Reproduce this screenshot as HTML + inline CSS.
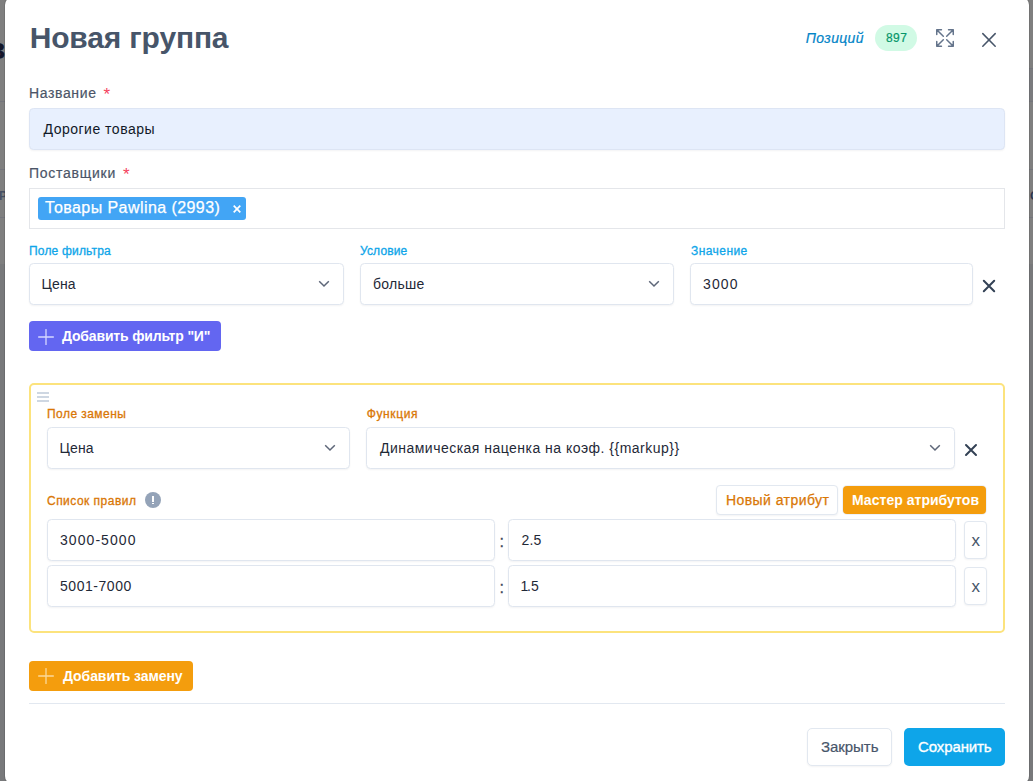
<!DOCTYPE html>
<html lang="ru">
<head>
<meta charset="utf-8">
<title>Новая группа</title>
<style>
*{box-sizing:border-box;margin:0;padding:0}
html,body{width:1033px;height:781px;overflow:hidden}
body{font-family:"Liberation Sans",sans-serif;background:#78797b;position:relative;color:#1f2937}
.a{position:absolute}
.t{position:absolute;white-space:nowrap;line-height:20px}
.bg-top{left:0;top:0;width:1033px;height:264px;background:#7f7f7f}
.bg-line{left:0;width:1033px;height:1px;background:#74757c}
.modal{left:5px;top:-3px;width:1024px;height:787px;background:#fff;border-radius:8px;box-shadow:0 0 0 1px rgba(0,0,0,.1)}
.lbl{font-size:14px;color:#4b5568;-webkit-text-stroke:.2px #4b5568}
.ast{font-size:17px;color:#f43f5e}
.lb{font-size:12px;color:#0ea5e9;-webkit-text-stroke:.3px #0ea5e9}
.lo{font-size:12px;color:#d97706;-webkit-text-stroke:.3px #d97706}
.box{position:absolute;background:#fff;border:1px solid #e0e6ef;border-radius:4.500px;height:42px;box-shadow:0 1px 2px rgba(15,23,42,.05)}
.v{font-size:14px;color:#1f2937}
.chev{position:absolute;width:12px;height:8px}
.btn{position:absolute;border-radius:4px;height:30px}
.bt{font-size:14px;font-weight:700;color:#fff}
.xb{position:absolute;width:23px;height:38px;border:1px solid #e2e8f0;border-radius:4px;background:#fff;box-shadow:0 1px 2px rgba(15,23,42,.05)}
/*LS*/
#title{letter-spacing:-0.16px}
#poz{letter-spacing:0.35px}
#n897{letter-spacing:0.45px}
#l1{letter-spacing:0.63px}
#v1{letter-spacing:0.5px}
#l2{letter-spacing:0.74px}
#tag{letter-spacing:0.43px}
#l3{letter-spacing:0.18px}
#l4{letter-spacing:0.15px}
#l5{letter-spacing:0.44px}
#v2{letter-spacing:0.13px}
#v3{letter-spacing:0.26px}
#v4{letter-spacing:1.13px}
#b1{letter-spacing:-0.17px}
#l6{letter-spacing:0.45px}
#l7{letter-spacing:0.6px}
#v5{letter-spacing:0.13px}
#v6{letter-spacing:0.48px}
#l8{letter-spacing:0.48px}
#b2{letter-spacing:0.43px}
#b3{letter-spacing:0.03px}
#v7{letter-spacing:1.06px}
#v9{letter-spacing:0.54px}
#v8{letter-spacing:0.1px}
#b4{letter-spacing:-0.07px}
#b5{letter-spacing:-0.05px}
#b6{letter-spacing:-0.11px}
/*ENDLS*/
</style>
</head>
<body>
<div class="a bg-top"></div>
<div class="a" style="left:1020px;top:68px;width:13px;height:33px;background:#7a7b7e"></div>
<div class="a bg-line" style="top:68px;left:1020px;width:13px"></div>
<div class="a bg-line" style="top:101px"></div>
<div class="a bg-line" style="top:169px"></div>
<div class="a bg-line" style="top:217px"></div>
<div class="t" style="left:-13px;top:29px;font-size:30px;font-weight:700;color:#15172a;line-height:40px">в</div>
<div class="t" style="left:-1px;top:186px;font-size:12px;font-weight:700;color:#465064">Р</div>
<div class="t" style="left:1030px;top:186px;font-size:12px;font-weight:700;color:#2c3550">О</div>

<div class="a modal"></div>

<!-- header -->
<div id="title" class="t" style="left:29.7px;top:17.6px;font-size:30px;font-weight:700;color:#475569;line-height:40px">Новая группа</div>
<div id="poz" class="t" style="left:805.8px;top:28px;font-size:14px;font-style:italic;color:#0284c7;-webkit-text-stroke:.2px #0284c7">Позиций</div>
<div class="a" style="left:875px;top:25px;width:42px;height:26px;border-radius:13px;background:#d1fae5"></div>
<div id="n897" class="t" style="left:886px;top:28px;font-size:12px;color:#059669;-webkit-text-stroke:.2px #059669">897</div>
<svg class="a" style="left:933px;top:26px" width="24" height="24" viewBox="0 0 24 24" fill="none" stroke="#64748b" stroke-width="1.500" stroke-linecap="round" stroke-linejoin="round"><path d="M3.750 3.750v4.700m0-4.700h4.700m-4.700 0L10.300 10.300M3.750 20.250v-4.700m0 4.700h4.700m-4.700 0L10.300 13.700M20.250 3.750h-4.700m4.700 0v4.700m0-4.700L13.700 10.300M20.250 20.250h-4.700m4.700 0v-4.700m0 4.700L13.700 13.700"/></svg>
<svg class="a" style="left:977px;top:28px" width="24" height="24" viewBox="0 0 24 24" fill="none" stroke="#475569" stroke-width="1.500" stroke-linecap="round"><path d="M5.800 5.600l12.400 12.600M18.200 5.600L5.800 18.200"/></svg>

<!-- name -->
<div id="l1" class="t lbl" style="left:29px;top:83px">Название</div>
<div id="a1" class="t ast" style="left:103.600px;top:85px">*</div>
<div class="box" style="left:29px;top:108px;width:976px;background:#e8f0fe;border-color:#dde5f4"></div>
<div id="v1" class="t v" style="left:43.5px;top:119px;color:#111827">Дорогие товары</div>

<!-- suppliers -->
<div id="l2" class="t lbl" style="left:29px;top:163px">Поставщики</div>
<div id="a2" class="t ast" style="left:123px;top:165px">*</div>
<div class="a" style="left:29px;top:188px;width:976px;height:41px;border:1px solid #e4e6ea;background:#fff"></div>
<div class="a" style="left:38px;top:197px;width:208px;height:23px;border-radius:3px;background:#42a5f5"></div>
<div id="tag" class="t" style="left:45px;top:198px;font-size:16px;color:#fff;-webkit-text-stroke:.25px #fff">Товары Pawlina (2993)</div>
<svg class="a" style="left:233px;top:205px" width="8" height="8" viewBox="0 0 8 8" fill="none" stroke="#fff" stroke-width="1.700"><path d="M.7.700l6.600 6.600M7.300.7L.7 7.300"/></svg>

<!-- filter row -->
<div id="l3" class="t lb" style="left:29px;top:240.6px">Поле фильтра</div>
<div id="l4" class="t lb" style="left:360px;top:240.6px">Условие</div>
<div id="l5" class="t lb" style="left:691px;top:240.6px">Значение</div>
<div class="box" style="left:29px;top:263px;width:315px"></div>
<div class="box" style="left:360px;top:263px;width:314px"></div>
<div class="box" style="left:690px;top:263px;width:283px"></div>
<div id="v2" class="t v" style="left:41.5px;top:274px">Цена</div>
<div id="v3" class="t v" style="left:373px;top:274px">больше</div>
<div id="v4" class="t v" style="left:703px;top:274px">3000</div>
<svg class="chev" style="left:318.100px;top:280.300px" viewBox="0 0 12 8" fill="none" stroke="#5d6678" stroke-width="1.500" stroke-linecap="butt" stroke-linejoin="miter"><path d="M1.200 1.200L6 6l4.800-4.800"/></svg>
<svg class="chev" style="left:648.100px;top:280.300px" viewBox="0 0 12 8" fill="none" stroke="#5d6678" stroke-width="1.500" stroke-linecap="butt" stroke-linejoin="miter"><path d="M1.200 1.200L6 6l4.800-4.800"/></svg>
<svg class="a" style="left:981px;top:278px" width="16" height="16" viewBox="0 0 16 16" fill="none" stroke="#334155" stroke-width="2" stroke-linecap="round"><path d="M2.800 2.800l10.400 10.400M13.200 2.800L2.800 13.200"/></svg>

<div class="btn" style="left:29px;top:321px;width:192px;background:#6366f1"></div>
<svg class="a" style="left:38px;top:328.500px" width="16" height="16" viewBox="0 0 16 16" fill="none" stroke="#d6d7ff" stroke-width="1.300" stroke-linecap="round"><path d="M8 .6v14.800M.6 8h14.800"/></svg>
<div id="b1" class="t bt" style="left:62px;top:326px">Добавить фильтр "И"</div>

<!-- replace box -->
<div class="a" style="left:29px;top:383px;width:976px;height:250px;border:2px solid #fce37d;border-radius:5px;background:#fff"></div>
<svg class="a" style="left:37px;top:392px" width="12" height="10" viewBox="0 0 12 10" fill="none" stroke="#bfcad9" stroke-width="1.400"><path d="M0 1h12M0 5h12M0 9h12"/></svg>
<div id="l6" class="t lo" style="left:47px;top:404.4px">Поле замены</div>
<div id="l7" class="t lo" style="left:366.8px;top:404.4px">Функция</div>
<div class="box" style="left:47px;top:427px;width:303px"></div>
<div class="box" style="left:366px;top:427px;width:589px"></div>
<div id="v5" class="t v" style="left:59.5px;top:438px">Цена</div>
<div id="v6" class="t v" style="left:380px;top:438px">Динамическая наценка на коэф. {{markup}}</div>
<svg class="chev" style="left:324.100px;top:444.300px" viewBox="0 0 12 8" fill="none" stroke="#5d6678" stroke-width="1.500" stroke-linecap="butt" stroke-linejoin="miter"><path d="M1.200 1.200L6 6l4.800-4.800"/></svg>
<svg class="chev" style="left:929.200px;top:444.300px" viewBox="0 0 12 8" fill="none" stroke="#5d6678" stroke-width="1.500" stroke-linecap="butt" stroke-linejoin="miter"><path d="M1.200 1.200L6 6l4.800-4.800"/></svg>
<svg class="a" style="left:963px;top:442px" width="16" height="16" viewBox="0 0 16 16" fill="none" stroke="#334155" stroke-width="2" stroke-linecap="round"><path d="M3 3l10 10M13 3L3 13"/></svg>

<div id="l8" class="t lo" style="left:47px;top:490.6px">Список правил</div>
<div class="a" style="left:145px;top:492px;width:16px;height:16px;border-radius:8px;background:#94a3b8"></div>
<div class="a" style="left:152px;top:496px;width:2.300px;height:6px;background:#fff"></div><div class="a" style="left:152px;top:502.700px;width:2.300px;height:1.500px;background:#fff"></div>
<div class="a" style="left:716px;top:485px;width:122px;height:30px;border:1px solid #e2e8f0;border-radius:4px;background:#fff;box-shadow:0 1px 2px rgba(15,23,42,.05)"></div>
<div id="b2" class="t" style="left:726px;top:490px;font-size:14px;color:#d97706;-webkit-text-stroke:.25px #d97706">Новый атрибут</div>
<div class="btn" style="left:843px;top:486px;width:143px;height:28px;background:#f49d0d;box-shadow:0 0 0 1px #edf2fa;border-radius:4px"></div>
<div id="b3" class="t bt" style="left:852px;top:490px">Мастер атрибутов</div>

<div class="box" style="left:47px;top:519px;width:448px"></div>
<div id="v7" class="t v" style="left:60px;top:530px">3000-5000</div>
<div class="t" style="left:499.500px;top:532px;font-size:16px;color:#3f4a5c;-webkit-text-stroke:.3px #3f4a5c">:</div>
<div class="box" style="left:508px;top:519px;width:448px"></div>
<div id="v8" class="t v" style="left:521.6px;top:530px">2.5</div>
<div class="xb" style="left:964px;top:521px"></div>
<div class="t" style="left:971.500px;top:531px;font-size:17px;color:#475569">x</div>

<div class="box" style="left:47px;top:565px;width:448px"></div>
<div id="v9" class="t v" style="left:60px;top:576px">5001-7000</div>
<div class="t" style="left:499.500px;top:578px;font-size:16px;color:#3f4a5c;-webkit-text-stroke:.3px #3f4a5c">:</div>
<div class="box" style="left:508px;top:565px;width:448px"></div>
<div id="v10" class="t v" style="left:520.500px;top:576px"><span style="letter-spacing:-1.300px">1</span>.5</div>
<div class="xb" style="left:964px;top:567px"></div>
<div class="t" style="left:971.500px;top:577px;font-size:17px;color:#475569">x</div>

<div class="btn" style="left:29px;top:661px;width:164px;background:#f49d0d"></div>
<svg class="a" style="left:38px;top:668px" width="16" height="16" viewBox="0 0 16 16" fill="none" stroke="#fbd99a" stroke-width="1.300" stroke-linecap="round"><path d="M8 .6v14.800M.6 8h14.800"/></svg>
<div id="b4" class="t bt" style="left:63px;top:666px">Добавить замену</div>

<!-- footer -->
<div class="a" style="left:29px;top:703px;width:976px;height:1px;background:#e2e8f0"></div>
<div class="a" style="left:807px;top:728px;width:85px;height:38px;border:1px solid #e2e8f0;border-radius:5px;background:#fff;box-shadow:0 1px 2px rgba(15,23,42,.05)"></div>
<div id="b5" class="t" style="left:821px;top:736.5px;font-size:15px;color:#475569;-webkit-text-stroke:.2px #475569">Закрыть</div>
<div class="a" style="left:904px;top:728px;width:101px;height:38px;border-radius:5px;background:#0ea5e9"></div>
<div id="b6" class="t" style="left:918px;top:736.5px;font-size:15px;color:#fff;-webkit-text-stroke:.35px #fff">Сохранить</div>
</body>
</html>
